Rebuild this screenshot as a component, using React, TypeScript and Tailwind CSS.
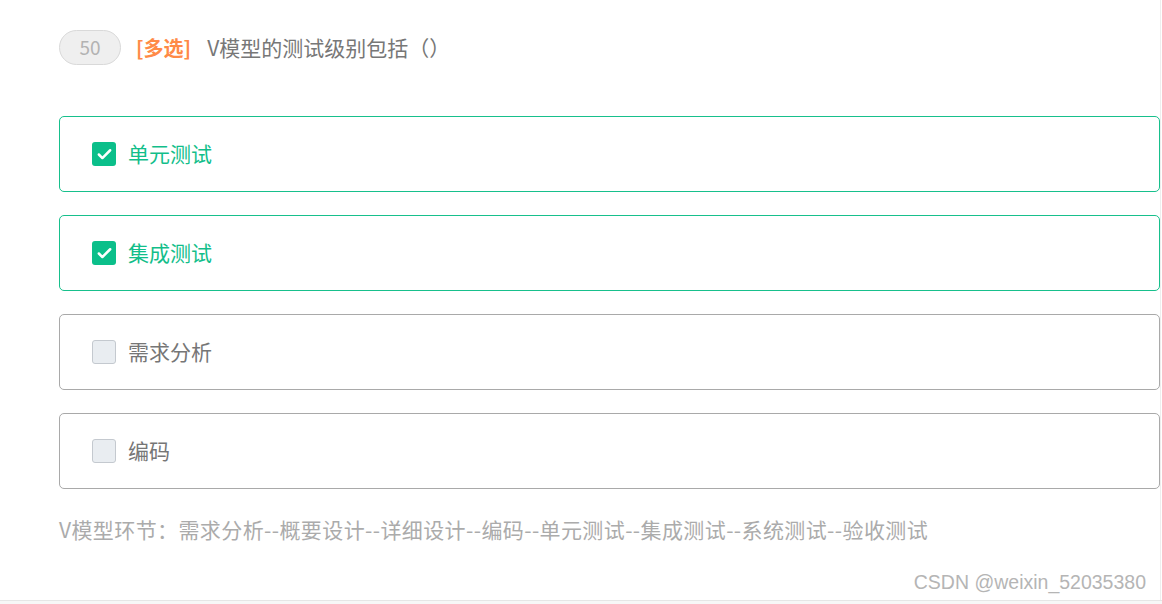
import { Check } from "lucide-react";

interface Option {
  label: string;
  checked: boolean;
}

const options: Option[] = [
  { label: "单元测试", checked: true },
  { label: "集成测试", checked: true },
  { label: "需求分析", checked: false },
  { label: "编码", checked: false },
];

function OptionCard({ label, checked }: Option) {
  return (
    <div
      className={
        checked
          ? "flex h-[76px] items-center gap-3 rounded-[5px] border border-[#17c08c] pl-[32px]"
          : "flex h-[76px] items-center gap-3 rounded-[5px] border border-[#a9a9a9] pl-[32px]"
      }
    >
      {checked ? (
        <span className="flex h-6 w-6 items-center justify-center rounded-[3px] bg-[#0bbf8a]">
          <Check className="h-[17px] w-[17px] text-white" strokeWidth={3.5} />
        </span>
      ) : (
        <span className="h-6 w-6 rounded-[3px] border border-[#c4c9cf] bg-[#e9edf1]" />
      )}
      <span
        className={
          checked
            ? "text-[21px] text-[#12be8a]"
            : "text-[21px] text-[#767676]"
        }
      >
        {label}
      </span>
    </div>
  );
}

function App() {
  return (
    <div
      className="relative h-[604px] w-[1162px] overflow-hidden bg-white"
      style={{ fontFamily: '"Noto Sans CJK SC", "Noto Sans", sans-serif' }}
    >
      <div className="flex h-[600px] w-[1161px] flex-col border-r border-[#eeeeee] pl-[59px] pt-[30px]">
        <div className="flex items-center">
          <span className="flex h-[35px] w-[62px] items-center justify-center rounded-full border border-[#d9d9d9] bg-[#efefef] text-[19px] text-[#b3b3b3]">
            50
          </span>
          <span className="ml-[15px] text-[20px] font-bold text-[#ff8a47]">
            [多选]
          </span>
          <span className="ml-[16px] text-[21px] text-[#777777]">
            V模型的测试级别包括（）
          </span>
        </div>
        <div className="mt-[51px] flex flex-col gap-[23px]">
          {options.map((o) => (
            <OptionCard key={o.label} label={o.label} checked={o.checked} />
          ))}
        </div>
        <p className="mt-[25px] text-[21px] tracking-[0.4px] text-[#ababab]">
          V模型环节：需求分析--概要设计--详细设计--编码--单元测试--集成测试--系统测试--验收测试
        </p>
        <div className="mt-auto flex justify-end pb-[3px] pr-[14px]">
          <span
            className="text-[19.5px] text-[#b5b5b5]"
            style={{ fontFamily: '"Liberation Sans", Arial, sans-serif' }}
          >
            CSDN @weixin_52035380
          </span>
        </div>
      </div>
      <div className="h-[4px] w-full border-t border-[#e6e6e6] bg-[#f7f7f7]" />
    </div>
  );
}

export default App;
